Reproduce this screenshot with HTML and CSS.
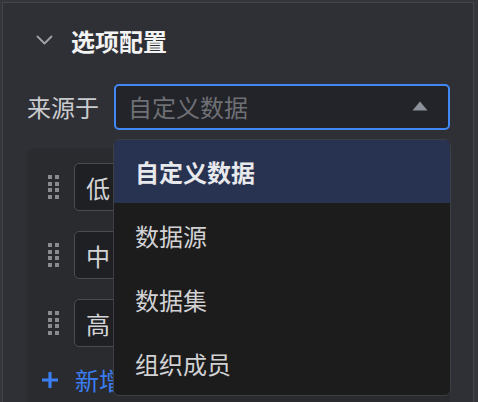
FILE: index.html
```html
<!DOCTYPE html>
<html lang="zh">
<head>
<meta charset="utf-8">
<link rel="stylesheet" href="styles.css">
</head>
<body>
<div class="panel">
  <div class="section-head">
    <svg class="chevron" width="17" height="10" viewBox="0 0 17 10"><path d="M1.5 1.5 L8.5 8.5 L15.5 1.5" fill="none" stroke="#a0a2a8" stroke-width="1.8" stroke-linecap="round" stroke-linejoin="round"/></svg>
    <span class="section-title">选项配置</span>
  </div>
  <div class="field-row">
    <label class="field-label">来源于</label>
    <div class="select-wrap">
      <div class="select">
        <span class="placeholder">自定义数据</span>
        <svg class="caret" width="16" height="10" viewBox="0 0 16 10"><path d="M8 0.5 L15.5 9.5 L0.5 9.5 Z" fill="#8b909b"/></svg>
      </div>
      <ul class="dropdown">
        <li class="option active">自定义数据</li>
        <li class="option">数据源</li>
        <li class="option">数据集</li>
        <li class="option">组织成员</li>
      </ul>
    </div>
  </div>
  <div class="options-card">
    <div class="opt-row"><span class="handle"><i></i><i></i><i></i><i></i><i></i><i></i><i></i><i></i></span><div class="opt-input">低</div></div>
    <div class="opt-row"><span class="handle"><i></i><i></i><i></i><i></i><i></i><i></i><i></i><i></i></span><div class="opt-input">中</div></div>
    <div class="opt-row"><span class="handle"><i></i><i></i><i></i><i></i><i></i><i></i><i></i><i></i></span><div class="opt-input">高</div></div>
    <div class="add-row">
      <svg class="plus" width="16" height="16" viewBox="0 0 16 16"><path d="M8 0 V16 M0 8 H16" stroke="#3b7ef2" stroke-width="3.2"/></svg>
      <span class="add-text">新增</span>
    </div>
  </div>
</div>
</body>
</html>
```

FILE: styles.css
```css
* { box-sizing: border-box; }
html, body { height: 100%; }
body {
  margin: 0;
  padding: 2px 4px 0 2px;
  background: #35363b;
  font-family: "Noto Sans CJK SC", "Noto Sans", sans-serif;
  overflow: hidden;
}
.panel {
  height: 100%;
  display: flex;
  flex-direction: column;
  background: #2f3035;
  border: 1px solid #44454a;
  border-bottom: none;
  padding: 16px 23px 0 24px;
}
.section-head {
  height: 44px;
  flex: none;
  display: flex;
  align-items: center;
  padding-left: 9px;
}
.chevron { display: block; margin-top: -2px; }
.section-title {
  margin-left: 18px;
  color: #f3f3f3;
  font-size: 24px;
  font-weight: 700;
  line-height: 1;
}
.field-row {
  margin-top: 21px;
  flex: none;
  display: flex;
  align-items: center;
  height: 46px;
}
.field-label {
  width: 87px;
  flex: none;
  color: #cacbce;
  font-size: 24px;
  line-height: 1;
}
.select-wrap {
  position: relative;
  flex: 1;
  height: 46px;
}
.select {
  height: 46px;
  border: 2px solid #4288f4;
  border-radius: 5px;
  background: #232429;
  display: flex;
  align-items: center;
  justify-content: space-between;
  padding: 0 20px 0 12px;
}
.placeholder {
  color: #6f7075;
  font-size: 24px;
  line-height: 1;
}
.caret { display: block; margin-top: -2px; }
.dropdown {
  position: absolute;
  z-index: 5;
  top: 55px;
  left: -1px;
  right: -1px;
  margin: 0;
  padding: 0;
  list-style: none;
  background: #1c1c1d;
  border: 1px solid #3e3f44;
  border-radius: 6px;
  overflow: hidden;
}
.option {
  height: 64px;
  display: flex;
  align-items: center;
  padding-left: 21px;
  color: #d2d2d4;
  font-size: 24px;
}
.option.active {
  height: 63px;
  background: #283351;
  color: #e8e9ec;
  font-weight: 700;
}
.options-card {
  margin-top: 18px;
  flex: 1;
  min-height: 0;
  overflow: hidden;
  background: #2a2b2f;
  border-radius: 7px 7px 0 0;
  padding: 15px 0 0 15px;
}
.opt-row {
  display: flex;
  align-items: center;
  height: 48px;
  margin-bottom: 20px;
  padding-left: 6px;
}
.handle {
  display: grid;
  grid-template-columns: 4px 4px;
  grid-auto-rows: 4px;
  column-gap: 3px;
  row-gap: 2.7px;
  width: 11px;
  flex: none;
}
.handle i {
  display: block;
  width: 4px;
  height: 4px;
  background: #8a8b90;
}
.opt-input {
  margin-left: 15px;
  width: 300px;
  height: 48px;
  border: 1.5px solid #4b4c51;
  border-radius: 5px;
  background: #1f2024;
  color: #d4d4d6;
  font-size: 24px;
  display: flex;
  align-items: center;
  padding-left: 11px;
}
.add-row {
  display: flex;
  align-items: center;
  height: 26px;
  margin-top: 2px;
}
.plus { display: block; }
.add-text {
  margin-left: 17px;
  color: #3b7ef2;
  font-size: 24px;
  line-height: 1;
}
```
